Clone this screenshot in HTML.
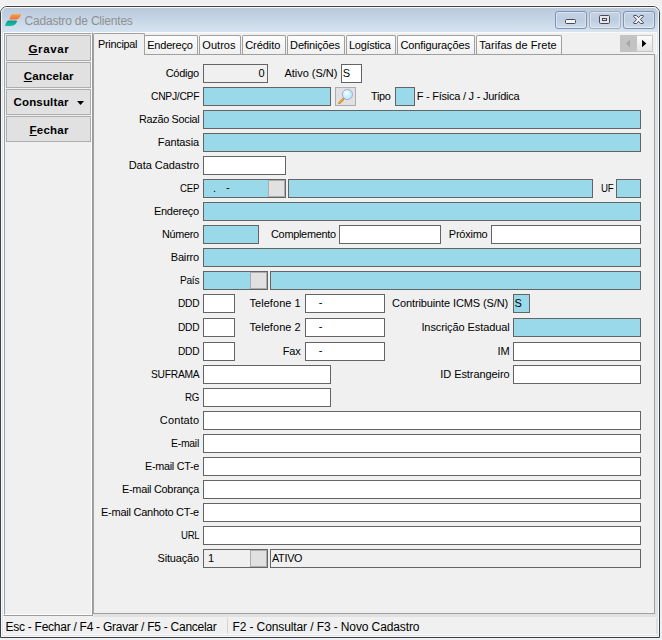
<!DOCTYPE html>
<html><head><meta charset="utf-8"><title>Cadastro de Clientes</title>
<style>
html,body{margin:0;padding:0}
body{width:662px;height:640px;overflow:hidden;background:#f0f0f0;position:relative;font-family:"Liberation Sans",sans-serif;font-size:11px;color:#000}
div,span{position:absolute;box-sizing:content-box}
.t{white-space:pre;line-height:20px;height:20px;transform-origin:0 0}
.t u{text-decoration:underline;text-decoration-thickness:1px;text-underline-offset:1px;text-decoration-skip-ink:none}
#halo{left:-1px;top:5px;width:661px;height:633px;border-radius:8px 8px 0 0;background:#fbfbfb}
#win{left:0;top:6px;width:658px;height:630px;border:1px solid #404040;border-radius:7px 7px 0 0;background:#d9e5f2;overflow:hidden}
#tbar{left:0;top:0;width:658px;height:25px;background:linear-gradient(#dfe8f2 0,#dfe8f2 1px,#b9c9db 1px,#d6e3f1 25px)}
#client{left:3px;top:32px;width:652px;height:601px;border:1px solid #fbfbfb;background:#f0f0f0}
#hl{left:1px;top:7px;width:656px;height:628px;border:1px solid rgba(255,255,255,.75);border-radius:6px 6px 0 0}
.cb{top:11px;width:30px;height:16px;border:1px solid #8091b6;border-radius:3px;background:linear-gradient(#c4d2e4,#bdcce0 50%,#cfdceb);box-shadow:inset 0 0 0 1px rgba(255,255,255,.4)}
#lpo{left:3px;top:32px;width:88px;height:582px;border:1px solid #9c9c9c;border-left-color:#fcfcfc;border-top-color:#fcfcfc}
#lp{left:4px;top:33px;width:86px;height:580px;border:1px solid #fff;border-left-color:#a0a0a0;border-top-color:#a0a0a0;background:#f0f0f0}
.lb{width:83px;height:24px;border:1px solid #adadad;background:#e1e1e1}
#pg{left:93px;top:54px;width:560px;height:558px;border:1px solid #a0a0a0;background:#f0f0f0}
.tab{border:1px solid #a0a0a0;border-bottom:none;border-radius:2px 2px 0 0;background:linear-gradient(#fdfdfd,#f0f0f0)}
.tab.sel{background:#f0f0f0}
.f{border:1px solid #646464}
.b{border:1px solid #adadad;background:#e1e1e1}
</style></head>
<body>
<div id="halo"></div>
<div id="win"><div id="tbar"></div></div>
<div id="client"></div>
<div id="hl"></div>
<svg style="position:absolute;left:5px;top:14px" width="17" height="13" viewBox="0 0 17 13"><defs><linearGradient id="og" x1="0" y1="0" x2="0" y2="1"><stop offset="0" stop-color="#fba23a"/><stop offset="1" stop-color="#f7693c"/></linearGradient><linearGradient id="tg" x1="0" y1="0" x2="0" y2="1"><stop offset="0" stop-color="#0d9a8a"/><stop offset="1" stop-color="#1dbfa6"/></linearGradient></defs><path d="M7 0.2 H15 Q16.3 0.2 15.8 1.5 Q14.3 5.4 10.5 5.6 H5.2 Q4 5.6 4.6 4.4 Q5.8 0.5 7 0.2Z" fill="url(#og)"/><path d="M3 6.6 H11.2 Q12.4 6.6 11.9 7.8 Q10.3 11.8 6.5 12 H1 Q-0.2 12 0.3 10.8 Q1.8 6.9 3 6.6Z" fill="url(#tg)"/></svg>
<div class="cb" style="left:555px"></div>
<div class="cb" style="left:589px;border-color:#a9adb5"></div>
<div class="cb" style="left:623px"></div>
<svg style="position:absolute;left:565px;top:15px" width="80" height="10" viewBox="0 0 80 10">
<rect x="0.5" y="4.5" width="10" height="4" rx="1" fill="#f4f4f4" stroke="#454859"/>
<rect x="34.5" y="0.5" width="10" height="8" rx="1" fill="#e6e6e6" stroke="#454859"/><rect x="37.5" y="3.5" width="4" height="2" fill="#dbe6f3" stroke="#454859"/>
<path transform="translate(68 0)" d="M0.5 1.2Q0.5 0.5 1.2 0.5H3.4L5.5 2.7 7.6 0.5H9.8Q10.5 0.5 10.5 1.2L7.4 4.5 10.5 7.8Q10.5 8.5 9.8 8.5H7.6L5.5 6.3 3.4 8.5H1.2Q0.5 8.5 0.5 7.8L3.6 4.5Z" fill="#f6f6f6" stroke="#40445a" stroke-linejoin="round"/>
</svg>
<div id="lpo"></div><div id="lp"></div>
<div class="lb" style="left:6px;top:35px"></div>
<div class="lb" style="left:6px;top:62px"></div>
<div class="lb" style="left:6px;top:89px"></div>
<div class="lb" style="left:6px;top:116px"></div>
<svg style="position:absolute;left:77px;top:101px" width="8" height="4" viewBox="0 0 8 4"><path d="M0 0h7l-3.5 4z" fill="#000"/></svg>
<div style="left:94px;top:614px;width:563px;height:3px;background:#e1e1e1"></div><div style="left:655px;top:55px;width:2px;height:561px;background:#e2e2e2"></div>
<div id="pg"></div>
<div class="tab sel" style="left:93px;top:33px;width:50px;height:21px"></div>
<div class="tab" style="left:144px;top:35px;width:52px;height:18px"></div>
<div class="tab" style="left:199px;top:35px;width:40px;height:18px"></div>
<div class="tab" style="left:242px;top:35px;width:42px;height:18px"></div>
<div class="tab" style="left:287px;top:35px;width:56px;height:18px"></div>
<div class="tab" style="left:346px;top:35px;width:48px;height:18px"></div>
<div class="tab" style="left:397px;top:35px;width:76px;height:18px"></div>
<div class="tab" style="left:476px;top:35px;width:84px;height:18px"></div>
<div style="left:620px;top:35px;width:17px;height:17px;background:#c3c3c3"></div>
<div style="left:637px;top:35px;width:15px;height:15px;border:1px solid #c6c6c6;border-left:0;background:linear-gradient(#fdfdfd,#e2e2e2)"></div>
<svg style="position:absolute;left:620px;top:35px" width="33" height="17" viewBox="0 0 33 17"><path d="M10 4.5v8l-4-4z" fill="#a6a6a6"/><path d="M22 4.8v7.4l4.3-3.7z" fill="#000"/></svg>
<div class="f" style="left:203px;top:64px;width:63px;height:17px;background:#f0f0f0"></div>
<div class="f" style="left:341px;top:64px;width:19px;height:17px;background:#fff"></div>
<div class="f" style="left:203px;top:87px;width:126px;height:17px;background:#99d9ea"></div>
<div class="f" style="left:395px;top:87px;width:18px;height:17px;background:#99d9ea"></div>
<div class="f" style="left:203px;top:110px;width:436px;height:17px;background:#99d9ea"></div>
<div class="f" style="left:203px;top:133px;width:436px;height:17px;background:#99d9ea"></div>
<div class="f" style="left:203px;top:156px;width:81px;height:17px;background:#fff"></div>
<div class="f" style="left:203px;top:179px;width:81px;height:17px;background:#99d9ea"></div>
<div class="b" style="left:268px;top:180px;width:15px;height:15px"></div>
<div class="f" style="left:288px;top:179px;width:303px;height:17px;background:#99d9ea"></div>
<div class="f" style="left:616px;top:179px;width:23px;height:17px;background:#99d9ea"></div>
<div class="f" style="left:203px;top:202px;width:436px;height:17px;background:#99d9ea"></div>
<div class="f" style="left:203px;top:225px;width:54px;height:17px;background:#99d9ea"></div>
<div class="f" style="left:339px;top:225px;width:100px;height:17px;background:#fff"></div>
<div class="f" style="left:491px;top:225px;width:148px;height:17px;background:#fff"></div>
<div class="f" style="left:203px;top:248px;width:436px;height:17px;background:#99d9ea"></div>
<div class="f" style="left:203px;top:271px;width:63px;height:17px;background:#99d9ea"></div>
<div class="b" style="left:250px;top:272px;width:15px;height:15px"></div>
<div class="f" style="left:270px;top:271px;width:369px;height:17px;background:#99d9ea"></div>
<div class="f" style="left:203px;top:294px;width:30px;height:17px;background:#fff"></div>
<div class="f" style="left:305px;top:294px;width:78px;height:17px;background:#fff"></div>
<div class="f" style="left:203px;top:318px;width:30px;height:17px;background:#fff"></div>
<div class="f" style="left:305px;top:318px;width:78px;height:17px;background:#fff"></div>
<div class="f" style="left:203px;top:342px;width:30px;height:17px;background:#fff"></div>
<div class="f" style="left:305px;top:342px;width:78px;height:17px;background:#fff"></div>
<div class="f" style="left:513px;top:294px;width:15px;height:17px;background:#99d9ea"></div>
<div class="f" style="left:513px;top:318px;width:126px;height:17px;background:#99d9ea"></div>
<div class="f" style="left:513px;top:342px;width:126px;height:17px;background:#fff"></div>
<div class="f" style="left:203px;top:365px;width:126px;height:17px;background:#fff"></div>
<div class="f" style="left:513px;top:365px;width:126px;height:17px;background:#fff"></div>
<div class="f" style="left:203px;top:388px;width:126px;height:17px;background:#fff"></div>
<div class="f" style="left:203px;top:411px;width:436px;height:17px;background:#fff"></div>
<div class="f" style="left:203px;top:434px;width:436px;height:17px;background:#fff"></div>
<div class="f" style="left:203px;top:457px;width:436px;height:17px;background:#fff"></div>
<div class="f" style="left:203px;top:480px;width:436px;height:17px;background:#fff"></div>
<div class="f" style="left:203px;top:503px;width:436px;height:17px;background:#fff"></div>
<div class="f" style="left:203px;top:526px;width:436px;height:17px;background:#fff"></div>
<div class="f" style="left:203px;top:549px;width:63px;height:17px;background:#f0f0f0"></div>
<div class="b" style="left:250px;top:550px;width:15px;height:15px"></div>
<div class="f" style="left:270px;top:549px;width:369px;height:17px;background:#f0f0f0"></div>
<div class="b" style="left:335px;top:87px;width:19px;height:17px"></div>
<svg style="position:absolute;left:335px;top:87px" width="21" height="19" viewBox="0 0 21 19"><defs><radialGradient id="lg" cx="0.4" cy="0.35" r="0.7"><stop offset="0" stop-color="#ffffff"/><stop offset="0.5" stop-color="#c9f3f7"/><stop offset="1" stop-color="#bdeef5"/></radialGradient></defs><path d="M8.4 11.9L4.3 16" stroke="#b07a34" stroke-width="2.2" stroke-linecap="round"/><path d="M8.1 11.5L4 15.6" stroke="#f5b23c" stroke-width="1.5" stroke-linecap="round"/><circle cx="12.4" cy="7.5" r="5" fill="url(#lg)" stroke="#a3a0e0" stroke-width="1"/></svg>
<div style="left:227px;top:618px;width:1px;height:16px;background:#d5d5d5"></div><div style="left:656px;top:618px;width:1px;height:16px;background:#dcdcdc"></div>

<span class="t" id="t0" style="left:165.7px;top:63.19px;font-size:11px;letter-spacing:-0.272px;">Código</span>
<span class="t" id="t1" style="left:258.5px;top:63.19px;font-size:11px;">0</span>
<span class="t" id="t2" style="left:284.5px;top:63.19px;font-size:11px;letter-spacing:-0.029px;">Ativo (S/N)</span>
<span class="t" id="t3" style="left:342.8px;top:63.19px;font-size:11px;">S</span>
<span class="t" id="t4" style="left:150.7px;top:86.19px;font-size:11px;letter-spacing:-0.280px;transform:scaleX(0.9359);">CNPJ/CPF</span>
<span class="t" id="t5" style="left:370.5px;top:86.19px;font-size:11px;letter-spacing:-0.280px;transform:scaleX(0.9871);">Tipo</span>
<span class="t" id="t6" style="left:416.8px;top:86.19px;font-size:11px;letter-spacing:-0.246px;">F - Física / J - Jurídica</span>
<span class="t" id="t7" style="left:138.5px;top:109.19px;font-size:11px;letter-spacing:-0.280px;transform:scaleX(0.9830);">Razão Social</span>
<span class="t" id="t8" style="left:157.8px;top:132.19px;font-size:11px;letter-spacing:-0.115px;">Fantasia</span>
<span class="t" id="t9" style="left:128.7px;top:155.19px;font-size:11px;letter-spacing:-0.036px;">Data Cadastro</span>
<span class="t" id="t10" style="left:179.9px;top:178.19px;font-size:11px;letter-spacing:-0.280px;transform:scaleX(0.8747);">CEP</span>
<span class="t" id="t11" style="left:600.5px;top:178.19px;font-size:11px;letter-spacing:-0.280px;transform:scaleX(0.8824);">UF</span>
<span class="t" id="t12" style="left:213.1px;top:178.19px;font-size:11px;">.</span>
<span class="t" id="t13" style="left:226.1px;top:177.19px;font-size:11px;">-</span>
<span class="t" id="t14" style="left:153.9px;top:201.19px;font-size:11px;letter-spacing:-0.256px;">Endereço</span>
<span class="t" id="t15" style="left:162.1px;top:224.19px;font-size:11px;letter-spacing:-0.280px;transform:scaleX(0.9834);">Número</span>
<span class="t" id="t16" style="left:270.5px;top:224.19px;font-size:11px;letter-spacing:-0.280px;transform:scaleX(0.9911);">Complemento</span>
<span class="t" id="t17" style="left:448.8px;top:224.19px;font-size:11px;letter-spacing:-0.241px;">Próximo</span>
<span class="t" id="t18" style="left:170.8px;top:247.19px;font-size:11px;letter-spacing:-0.189px;">Bairro</span>
<span class="t" id="t19" style="left:179.7px;top:270.19px;font-size:11px;letter-spacing:-0.280px;transform:scaleX(0.9209);">País</span>
<span class="t" id="t20" style="left:177.7px;top:293.19px;font-size:11px;letter-spacing:-0.280px;transform:scaleX(0.9234);">DDD</span>
<span class="t" id="t21" style="left:249.5px;top:293.19px;font-size:11px;letter-spacing:0.048px;">Telefone 1</span>
<span class="t" id="t22" style="left:318.8px;top:292.19px;font-size:11px;">-</span>
<span class="t" id="t23" style="left:177.7px;top:317.19px;font-size:11px;letter-spacing:-0.280px;transform:scaleX(0.9234);">DDD</span>
<span class="t" id="t24" style="left:249.5px;top:317.19px;font-size:11px;letter-spacing:0.048px;">Telefone 2</span>
<span class="t" id="t25" style="left:318.8px;top:316.19px;font-size:11px;">-</span>
<span class="t" id="t26" style="left:177.7px;top:341.19px;font-size:11px;letter-spacing:-0.280px;transform:scaleX(0.9234);">DDD</span>
<span class="t" id="t27" style="left:282.8px;top:341.19px;font-size:11px;letter-spacing:-0.222px;">Fax</span>
<span class="t" id="t28" style="left:318.8px;top:340.19px;font-size:11px;">-</span>
<span class="t" id="t29" style="left:392.1px;top:293.19px;font-size:11px;letter-spacing:-0.113px;">Contribuinte ICMS (S/N)</span>
<span class="t" id="t30" style="left:514.5px;top:293.19px;font-size:11px;">S</span>
<span class="t" id="t31" style="left:421.4px;top:317.19px;font-size:11px;letter-spacing:-0.094px;">Inscrição Estadual</span>
<span class="t" id="t32" style="left:497.5px;top:341.19px;font-size:11px;letter-spacing:-0.034px;">IM</span>
<span class="t" id="t33" style="left:150.6px;top:364.19px;font-size:11px;letter-spacing:-0.280px;transform:scaleX(0.9328);">SUFRAMA</span>
<span class="t" id="t34" style="left:440.3px;top:364.19px;font-size:11px;letter-spacing:-0.070px;">ID Estrangeiro</span>
<span class="t" id="t35" style="left:184.8px;top:387.19px;font-size:11px;letter-spacing:-0.280px;transform:scaleX(0.8878);">RG</span>
<span class="t" id="t36" style="left:159.8px;top:410.19px;font-size:11px;letter-spacing:0.145px;">Contato</span>
<span class="t" id="t37" style="left:171.0px;top:433.19px;font-size:11px;letter-spacing:-0.280px;transform:scaleX(0.9472);">E-mail</span>
<span class="t" id="t38" style="left:145.0px;top:456.19px;font-size:11px;letter-spacing:-0.280px;transform:scaleX(0.9808);">E-mail CT-e</span>
<span class="t" id="t39" style="left:121.9px;top:479.19px;font-size:11px;letter-spacing:-0.280px;transform:scaleX(0.9910);">E-mail Cobrança</span>
<span class="t" id="t40" style="left:101.0px;top:502.19px;font-size:11px;letter-spacing:-0.251px;">E-mail Canhoto CT-e</span>
<span class="t" id="t41" style="left:180.5px;top:525.19px;font-size:11px;letter-spacing:-0.280px;transform:scaleX(0.8716);">URL</span>
<span class="t" id="t42" style="left:157.5px;top:548.19px;font-size:11px;letter-spacing:-0.159px;">Situação</span>
<span class="t" id="t43" style="left:207.9px;top:548.19px;font-size:11px;">1</span>
<span class="t" id="t44" style="left:271.7px;top:548.19px;font-size:11px;letter-spacing:-0.280px;transform:scaleX(0.9812);">ATIVO</span>
<span class="t" id="t45" style="left:98.1px;top:34.19px;font-size:11px;letter-spacing:-0.280px;transform:scaleX(0.9888);">Principal</span>
<span class="t" id="t46" style="left:147.2px;top:35.19px;font-size:11px;letter-spacing:-0.199px;">Endereço</span>
<span class="t" id="t47" style="left:202.3px;top:35.19px;font-size:11px;letter-spacing:0.037px;">Outros</span>
<span class="t" id="t48" style="left:245.2px;top:35.19px;font-size:11px;letter-spacing:-0.061px;">Crédito</span>
<span class="t" id="t49" style="left:290.1px;top:35.19px;font-size:11px;letter-spacing:-0.162px;">Definições</span>
<span class="t" id="t50" style="left:349.0px;top:35.19px;font-size:11px;letter-spacing:-0.266px;">Logística</span>
<span class="t" id="t51" style="left:400.4px;top:35.19px;font-size:11px;letter-spacing:-0.111px;">Configurações</span>
<span class="t" id="t52" style="left:479.3px;top:35.19px;font-size:11px;letter-spacing:0.065px;">Tarifas de Frete</span>
<span class="t" id="t53" style="left:28.5px;top:39.02px;font-size:11.5px;font-weight:bold;letter-spacing:0.609px;"><u>G</u>ravar</span>
<span class="t" id="t54" style="left:23.7px;top:66.02px;font-size:11.5px;font-weight:bold;letter-spacing:0.164px;"><u>C</u>ancelar</span>
<span class="t" id="t55" style="left:13.5px;top:92.42px;font-size:11.5px;font-weight:bold;letter-spacing:0.159px;">Consultar</span>
<span class="t" id="t56" style="left:29.5px;top:120.02px;font-size:11.5px;font-weight:bold;letter-spacing:0.244px;"><u>F</u>echar</span>
<span class="t" id="t57" style="left:5.5px;top:616.84px;font-size:12px;letter-spacing:-0.263px;">Esc - Fechar / F4 - Gravar / F5 - Cancelar</span>
<span class="t" id="t58" style="left:232.5px;top:616.84px;font-size:12px;letter-spacing:-0.110px;">F2 - Consultar / F3 - Novo Cadastro</span>
<span class="t" id="t59" style="left:24.5px;top:10.84px;font-size:12px;color:#909090;letter-spacing:-0.194px;">Cadastro de Clientes</span>

</body></html>
